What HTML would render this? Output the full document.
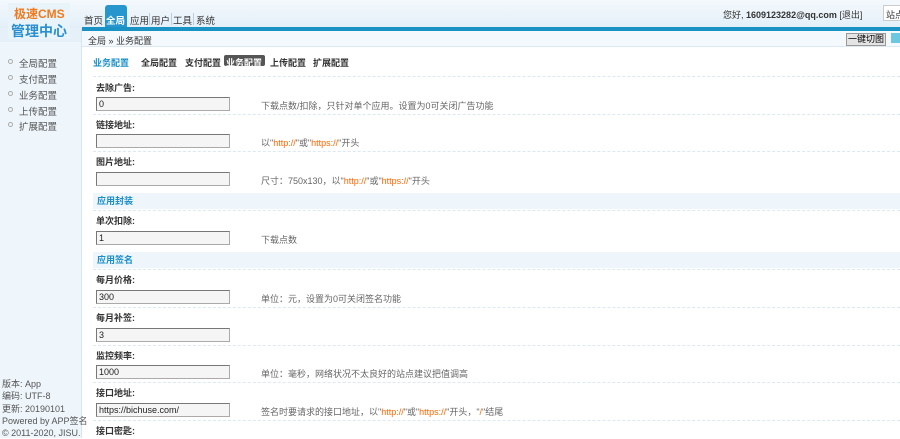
<!DOCTYPE html>
<html><head><meta charset="utf-8"><style>
*{margin:0;padding:0;box-sizing:border-box}
body{width:900px;height:438px;overflow:hidden;background:#fff;font-family:"Liberation Sans","Noto Sans CJK SC",sans-serif;font-size:9px;color:#333;position:relative}
.a{position:absolute;white-space:nowrap}
#top{left:0;top:0;width:900px;height:28px;background:linear-gradient(#f4f9fd,#e3eff8)}
#side{left:0;top:28px;width:82px;height:410px;background:#eef6fc;border-right:1px solid #d5e6f3}
.lbl{left:96px;font-weight:bold;color:#333}
.inp{left:96px;width:134px;height:14px;border:1px solid #aaa;border-top-color:#777;border-left-color:#777;background:#f5f5f5;font-size:9px;padding-left:2px;line-height:12px;color:#222}
.desc{left:261px;color:#666}
.o{color:#f60}
.sep{left:93px;width:807px;border-top:1px dashed #dce9f3;height:0}
.sec{left:93px;width:807px;height:16px;background:#eef5fb;color:#1a8ec8;font-weight:bold;padding-left:4px;line-height:16px}
.si{left:8px;color:#555;font-size:9.5px}
.si:before{content:"";display:inline-block;width:3px;height:3px;border:1px solid #aaa;border-radius:50%;margin-right:6px;vertical-align:3px}
.nv{top:13px;font-size:9.5px;color:#333}
</style></head><body>
<div id="top" class="a"></div>
<div id="side" class="a"></div>
<div class="a" style="left:0;top:28px;width:81px;height:14px;background:#e6f0f8"></div>
<div class="a" style="left:8px;top:3px;width:62px;height:36px;background:#e9f3fa"></div>
<div class="a" style="left:14px;top:5px;font-size:12px;font-weight:bold;color:#f07a1c">极速CMS</div>
<div class="a" style="left:11px;top:21px;font-size:14px;font-weight:bold;color:#2a8fd0">管理中心</div>
<div class="a nv" style="left:84px">首页</div>
<div class="a" style="left:105px;top:5px;width:22px;height:23px;background:#2796cc;border-radius:3px 3px 0 0"></div>
<div class="a nv" style="left:106px;color:#fff;font-weight:bold">全局</div>
<div class="a nv" style="left:130px">应用</div>
<div class="a" style="left:149px;top:13px;width:1px;height:12px;background:#bcd"></div>
<div class="a nv" style="left:151px">用户</div>
<div class="a" style="left:171px;top:13px;width:1px;height:12px;background:#bcd"></div>
<div class="a nv" style="left:173px">工具</div>
<div class="a" style="left:193px;top:13px;width:1px;height:12px;background:#bcd"></div>
<div class="a nv" style="left:196px">系统</div>
<div class="a" style="left:723px;top:8px;color:#333">您好, <b>1609123282@qq.com</b> [退出]</div>
<div class="a" style="left:883px;top:5px;width:20px;height:16px;border:1px solid #ccc;background:#fff;padding:2px">站点</div>
<div class="a" style="left:82px;top:27px;width:818px;height:4px;background:#1a93c4"></div>
<div class="a" style="left:82px;top:31px;width:818px;height:16px;background:#f4f9fd;border-bottom:1px solid #dde9f2"></div>
<div class="a" style="left:88px;top:34px;color:#333">全局 » 业务配置</div>
<div class="a" style="left:846px;top:33px;width:40px;height:13px;background:#e4e4e4;border:1px solid #999;font-size:9px;text-align:center;line-height:11px;color:#000">一键切图</div>
<div class="a" style="left:891px;top:33px;width:9px;height:10px;background:#6cc7e0"></div>
<div class="a si" style="top:56px">全局配置</div>
<div class="a si" style="top:72px">支付配置</div>
<div class="a si" style="top:88px">业务配置</div>
<div class="a si" style="top:104px">上传配置</div>
<div class="a si" style="top:119px">扩展配置</div>
<div class="a" style="left:2px;top:378px;color:#555;line-height:12.3px">版本: App<br>编码: UTF-8<br>更新: 20190101<br>Powered by APP签名<br>© 2011-2020, JISU.</div>
<div class="a" style="left:93px;top:56px;color:#1a8ec8;font-weight:bold">业务配置</div>
<div class="a" style="left:141px;top:56px;font-weight:bold">全局配置</div>
<div class="a" style="left:185px;top:56px;font-weight:bold">支付配置</div>
<div class="a" style="left:224px;top:55px;width:41px;height:11px;background:#555;border-radius:2px"></div>
<div class="a" style="left:226px;top:56px;font-weight:bold;color:#fff">业务配置</div>
<div class="a" style="left:270px;top:56px;font-weight:bold">上传配置</div>
<div class="a" style="left:313px;top:56px;font-weight:bold">扩展配置</div>
<div class="a sep" style="top:76px"></div>
<div class="a lbl" style="top:81px">去除广告:</div>
<div class="a inp" style="top:97px">0</div>
<div class="a desc" style="top:99px">下载点数/扣除，只针对单个应用。设置为0可关闭广告功能</div>
<div class="a sep" style="top:114px"></div>
<div class="a lbl" style="top:118px">链接地址:</div>
<div class="a inp" style="top:134px"></div>
<div class="a desc" style="top:136px">以"<span class="o">http://</span>"或"<span class="o">https://</span>"开头</div>
<div class="a sep" style="top:151px"></div>
<div class="a lbl" style="top:155px">图片地址:</div>
<div class="a inp" style="top:172px"></div>
<div class="a desc" style="top:174px">尺寸：750x130，以"<span class="o">http://</span>"或"<span class="o">https://</span>"开头</div>
<div class="a sec" style="top:193px">应用封装</div>
<div class="a sep" style="top:210px"></div>
<div class="a lbl" style="top:214px">单次扣除:</div>
<div class="a inp" style="top:231px">1</div>
<div class="a desc" style="top:233px">下载点数</div>
<div class="a sec" style="top:252px">应用签名</div>
<div class="a sep" style="top:269px"></div>
<div class="a lbl" style="top:273px">每月价格:</div>
<div class="a inp" style="top:290px">300</div>
<div class="a desc" style="top:292px">单位：元，设置为0可关闭签名功能</div>
<div class="a sep" style="top:307px"></div>
<div class="a lbl" style="top:311px">每月补签:</div>
<div class="a inp" style="top:328px">3</div>
<div class="a sep" style="top:345px"></div>
<div class="a lbl" style="top:349px">监控频率:</div>
<div class="a inp" style="top:365px">1000</div>
<div class="a desc" style="top:367px">单位：毫秒，网络状况不太良好的站点建议把值调高</div>
<div class="a sep" style="top:382px"></div>
<div class="a lbl" style="top:386px">接口地址:</div>
<div class="a inp" style="top:403px">https://bichuse.com/</div>
<div class="a desc" style="top:405px">签名时要请求的接口地址，以"<span class="o">http://</span>"或"<span class="o">https://</span>"开头，"<span class="o">/</span>"结尾</div>
<div class="a sep" style="top:420px"></div>
<div class="a lbl" style="top:424px">接口密匙:</div>
</body></html>
